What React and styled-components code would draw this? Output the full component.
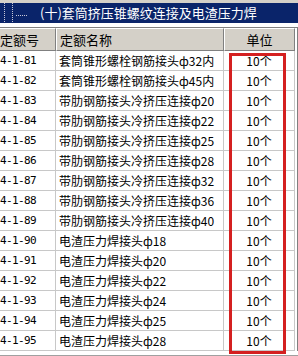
import React from 'react';
import styled, { createGlobalStyle } from 'styled-components';

const GlobalStyle = createGlobalStyle`
  html, body { margin: 0; padding: 0; background: #ffffff; }
  body { width: 298px; height: 356px; overflow: hidden; font-family: "Noto Sans CJK SC", "Noto Sans", sans-serif; }
`;

const Frame = styled.div`
  width: 298px;
  height: 356px;
  background: #d4d0c8;
  display: flex;
  flex-direction: column;
  overflow: hidden;
`;

const TopStrip = styled.div`
  height: 3px;
  background: #d4d0c8;
  flex: none;
`;

const TitleBar = styled.div`
  height: 20px;
  flex: none;
  background: #0a246a;
  display: flex;
  align-items: center;
  position: relative;
  color: #ffffff;
  font-size: 13px;
  line-height: 20px;
  padding-left: 40px;
`;

const TreeLines = styled.svg`
  position: absolute;
  left: 0;
  top: 0;
`;

const Gap = styled.div`
  height: 4px;
  flex: none;
  background: #ffffff;
  border-bottom: 1px solid #808080;
`;

const Grid = styled.div`
  flex: 1;
  position: relative;
  background: #ffffff;
  display: grid;
  grid-template-columns: 56px 168px 71px 3px;
  grid-auto-rows: 20px;
  grid-template-rows: 23px;
  align-content: start;
  border-bottom: 1px solid #a0a0a0;
`;

const HeadCell = styled.div`
  background: #d4d0c8;
  border-top: 1px solid #ffffff;
  border-left: ${p => (p.first ? 'none' : '1px solid #ffffff')};
  border-right: 1px solid #808080;
  border-bottom: 1px solid #808080;
  box-sizing: border-box;
  font-size: 13px;
  line-height: 21px;
  color: #000000;
  white-space: nowrap;
  overflow: hidden;
  text-align: ${p => (p.center ? 'center' : 'left')};
  padding-left: ${p => p.pad || 0}px;
`;

const Cell = styled.div`
  box-sizing: border-box;
  border-right: 1px solid #c8c8c8;
  border-bottom: 1px solid #c8c8c8;
  font-size: 12px;
  line-height: 19px;
  color: #000000;
  white-space: nowrap;
  overflow: hidden;
  text-align: ${p => (p.center ? 'center' : 'left')};
  padding-left: ${p => p.pad || 0}px;
`;

const Code = styled(Cell)`
  font-family: "DejaVu Sans Mono", "Liberation Mono", monospace;
  font-size: 11px;
  letter-spacing: -0.6px;
`;

const Filler = styled.div`
  background: #ffffff;
  border-left: 1px solid #ffffff;
  border-right: 1px solid #808080;
  box-sizing: border-box;
`;

const Highlight = styled.div`
  position: absolute;
  left: 229px;
  top: 25px;
  width: 57px;
  height: 301px;
  border: 3px solid #d42020;
  box-sizing: border-box;
  pointer-events: none;
`;

const rows = [
  ['4-1-81', '套筒锥形螺栓钢筋接头ф32内'],
  ['4-1-82', '套筒锥形螺栓钢筋接头ф45内'],
  ['4-1-83', '带肋钢筋接头冷挤压连接ф20'],
  ['4-1-84', '带肋钢筋接头冷挤压连接ф22'],
  ['4-1-85', '带肋钢筋接头冷挤压连接ф25'],
  ['4-1-86', '带肋钢筋接头冷挤压连接ф28'],
  ['4-1-87', '带肋钢筋接头冷挤压连接ф32'],
  ['4-1-88', '带肋钢筋接头冷挤压连接ф36'],
  ['4-1-89', '带肋钢筋接头冷挤压连接ф40'],
  ['4-1-90', '电渣压力焊接头ф18'],
  ['4-1-91', '电渣压力焊接头ф20'],
  ['4-1-92', '电渣压力焊接头ф22'],
  ['4-1-93', '电渣压力焊接头ф24'],
  ['4-1-94', '电渣压力焊接头ф25'],
  ['4-1-95', '电渣压力焊接头ф28'],
];

export default function App() {
  return (
    <Frame>
      <GlobalStyle />
      <TopStrip />
      <TitleBar>
        <TreeLines width="30" height="20">
          <line x1="4.5" y1="0" x2="4.5" y2="20" stroke="#c8c8d8" strokeDasharray="1 1" />
          <line x1="12.5" y1="0" x2="12.5" y2="20" stroke="#c8c8d8" strokeDasharray="1 1" />
          <line x1="16" y1="12.5" x2="28" y2="12.5" stroke="#c8c8d8" strokeDasharray="1 1" />
        </TreeLines>
        (十)套筒挤压锥螺纹连接及电渣压力焊
      </TitleBar>
      <Gap />
      <Grid>
        <HeadCell first>定额号</HeadCell>
        <HeadCell pad={3}>定额名称</HeadCell>
        <HeadCell center>单位</HeadCell>
        <Filler />
        {rows.map(([code, name]) => (
          <React.Fragment key={code}>
            <Code>{code}</Code>
            <Cell pad={3}>{name}</Cell>
            <Cell center>10个</Cell>
            <Filler />
          </React.Fragment>
        ))}
        <Highlight />
      </Grid>
    </Frame>
  );
}
